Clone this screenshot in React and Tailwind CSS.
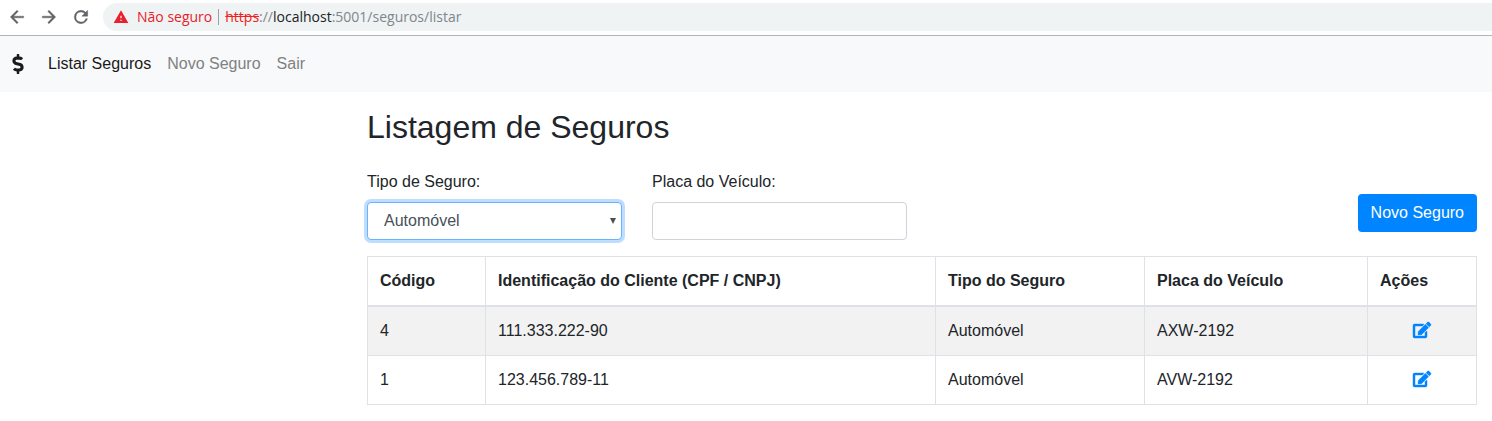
import { useState } from 'react';
import { FaDollarSign } from 'react-icons/fa';
import { MdWarning } from 'react-icons/md';

const policies = [
  { id: 4, client: '111.333.222-90', type: 'Automóvel', plate: 'AXW-2192' },
  { id: 1, client: '123.456.789-11', type: 'Automóvel', plate: 'AVW-2192' },
];

const BACK = 'M20 11H7.83l5.59-5.59L12 4l-8 8 8 8 1.41-1.41L7.83 13H20z';
const FORWARD = 'M12 4l-1.41 1.41L16.17 11H4v2h12.17l-5.58 5.59L12 20l8-8z';
const RELOAD =
  'M17.65 6.35A7.96 7.96 0 0 0 12 4a8 8 0 1 0 7.73 10h-2.08A6 6 0 1 1 12 6c1.66 0 3.14.69 4.22 1.78L13 11h7V4z';

function BarIcon({ d }) {
  return (
    <svg viewBox="0 0 24 24" fill="currentColor" stroke="currentColor" strokeWidth="0.5" className="block size-5" aria-hidden="true">
      <path d={d} />
    </svg>
  );
}

function EditIcon() {
  return (
    <svg viewBox="0 0 576 512" fill="currentColor" stroke="currentColor" strokeWidth="14" className="inline-block h-4 w-[18px] overflow-visible align-[-2px]" aria-hidden="true">
      <path d="M402.6 83.2l90.2 90.2c3.8 3.8 3.8 10 0 13.8L274.4 405.6l-92.8 10.3c-12.4 1.4-22.9-9.1-21.5-21.5l10.3-92.8L388.8 83.2c3.8-3.8 10-3.8 13.8 0zm162-22.9l-48.8-48.8c-15.2-15.2-39.9-15.2-55.2 0l-35.4 35.4c-3.8 3.8-3.8 10 0 13.8l90.2 90.2c3.8 3.8 10 3.8 13.8 0l35.4-35.4c15.2-15.3 15.2-40 0-55.2zM384 346.2V448H64V128h229.8c3.2 0 6.2-1.3 8.5-3.5l40-40c7.6-7.6 2.2-20.5-8.5-20.5H48C21.5 64 0 85.5 0 112v352c0 26.5 21.5 48 48 48h352c26.5 0 48-21.5 48-48V306.2c0-10.7-12.9-16-20.5-8.5l-40 40c-2.2 2.3-3.5 5.3-3.5 8.5z" />
    </svg>
  );
}

function BrowserBar() {
  return (
    <header className="flex h-9 items-center border-b border-[#b3b3b3] bg-white pb-px pl-[7px] text-[#5f6368]">
      <div className="flex items-center gap-3">
        <button type="button" aria-label="Voltar"><BarIcon d={BACK} /></button>
        <button type="button" aria-label="Avançar"><BarIcon d={FORWARD} /></button>
        <button type="button" aria-label="Recarregar"><BarIcon d={RELOAD} /></button>
      </div>
      <div className="ml-3 flex h-7 flex-1 items-center rounded-l-full bg-[#eff3f4] pl-2.5 font-['Open_Sans',sans-serif] text-[14px] leading-5">
        <MdWarning size={16} className="text-[#e8222d]" />
        <span className="ml-2 whitespace-nowrap text-[#e8222d]">Não seguro</span>
        <span className="mx-1.5 h-4 w-px bg-[#9aa0a6]" />
        <span className="whitespace-nowrap text-[#80868b]">
          <span className="text-[#f02222] line-through">https</span>://
          <span className="text-[#202124]">localhost</span>:5001/seguros/listar
        </span>
      </div>
    </header>
  );
}

function NavBar() {
  return (
    <nav className="flex h-14 items-center bg-[#f8f9fa] pl-3 text-[#808182]">
      <a href="#inicio" aria-label="Início" className="mr-4 text-[#1a1a1a]"><FaDollarSign size={20} className="w-3" /></a>
      <a href="#listar" className="px-2 text-[#1a1a1a]">Listar Seguros</a>
      <a href="#novo" className="px-2">Novo Seguro</a>
      <a href="#sair" className="px-2">Sair</a>
    </nav>
  );
}

export default function App() {
  const [type, setType] = useState('Automóvel');
  const [plate, setPlate] = useState('');
  const cell = 'border border-[#dee2e6] p-3';
  const head = 'border border-b-2 border-[#dee2e6] p-3 text-left font-bold';

  return (
    <div className="bg-white font-['Liberation_Sans',Arial,sans-serif] text-base text-[#212529]">
      <BrowserBar />
      <NavBar />
      <main className="ml-auto max-w-[1140px] px-[15px] pt-4">
        <h2 className="mb-6 text-[32px] leading-[38px]">Listagem de Seguros</h2>
        <div className="mb-4 grid grid-cols-4 gap-[30px]">
          <div>
            <label htmlFor="tipo" className="mb-2 block">Tipo de Seguro:</label>
            <div className="relative">
              <select
                id="tipo"
                value={type}
                onChange={(e) => setType(e.target.value)}
                className="block h-[38px] w-full appearance-none rounded border border-[#66b3ff] bg-white px-4 text-[#495057] shadow-[0_0_0_3px_#bfdeff] outline-none"
              >
                <option>Automóvel</option>
                <option>Residencial</option>
                <option>Vida</option>
              </select>
              <svg viewBox="0 0 6 6" className="pointer-events-none absolute top-4 right-1.5 size-1.5" aria-hidden="true">
                <path d="M0 0h6L3 6z" fill="#495057" />
              </svg>
            </div>
          </div>
          <div>
            <label htmlFor="placa" className="mb-2 block">Placa do Veículo:</label>
            <input
              id="placa"
              type="text"
              value={plate}
              onChange={(e) => setPlate(e.target.value)}
              className="block h-[38px] w-full rounded border border-[#ced4da] bg-white px-3 text-[#495057] outline-none"
            />
          </div>
          <div className="col-span-2 flex items-start justify-end pt-6">
            <button type="button" className="h-[38px] rounded bg-[#0084ff] px-[13px] text-white">Novo Seguro</button>
          </div>
        </div>
        <table className="w-full table-fixed border-collapse border border-[#dee2e6]">
          <colgroup>
            <col className="w-[118px]" />
            <col />
            <col className="w-[209px]" />
            <col className="w-[223px]" />
            <col className="w-[109px]" />
          </colgroup>
          <thead>
            <tr>
              <th className={head}>Código</th>
              <th className={head}>Identificação do Cliente (CPF / CNPJ)</th>
              <th className={head}>Tipo do Seguro</th>
              <th className={head}>Placa do Veículo</th>
              <th className={head}>Ações</th>
            </tr>
          </thead>
          <tbody>
            {policies.map((p) => (
              <tr key={p.id} className="odd:bg-[#f2f2f2]">
                <td className={cell}>{p.id}</td>
                <td className={cell}>{p.client}</td>
                <td className={cell}>{p.type}</td>
                <td className={cell}>{p.plate}</td>
                <td className="border border-[#dee2e6] p-3 text-center">
                  <a href={`#editar-${p.id}`} aria-label={`Editar seguro ${p.id}`} className="text-[#0084ff]">
                    <EditIcon />
                  </a>
                </td>
              </tr>
            ))}
          </tbody>
        </table>
      </main>
    </div>
  );
}
